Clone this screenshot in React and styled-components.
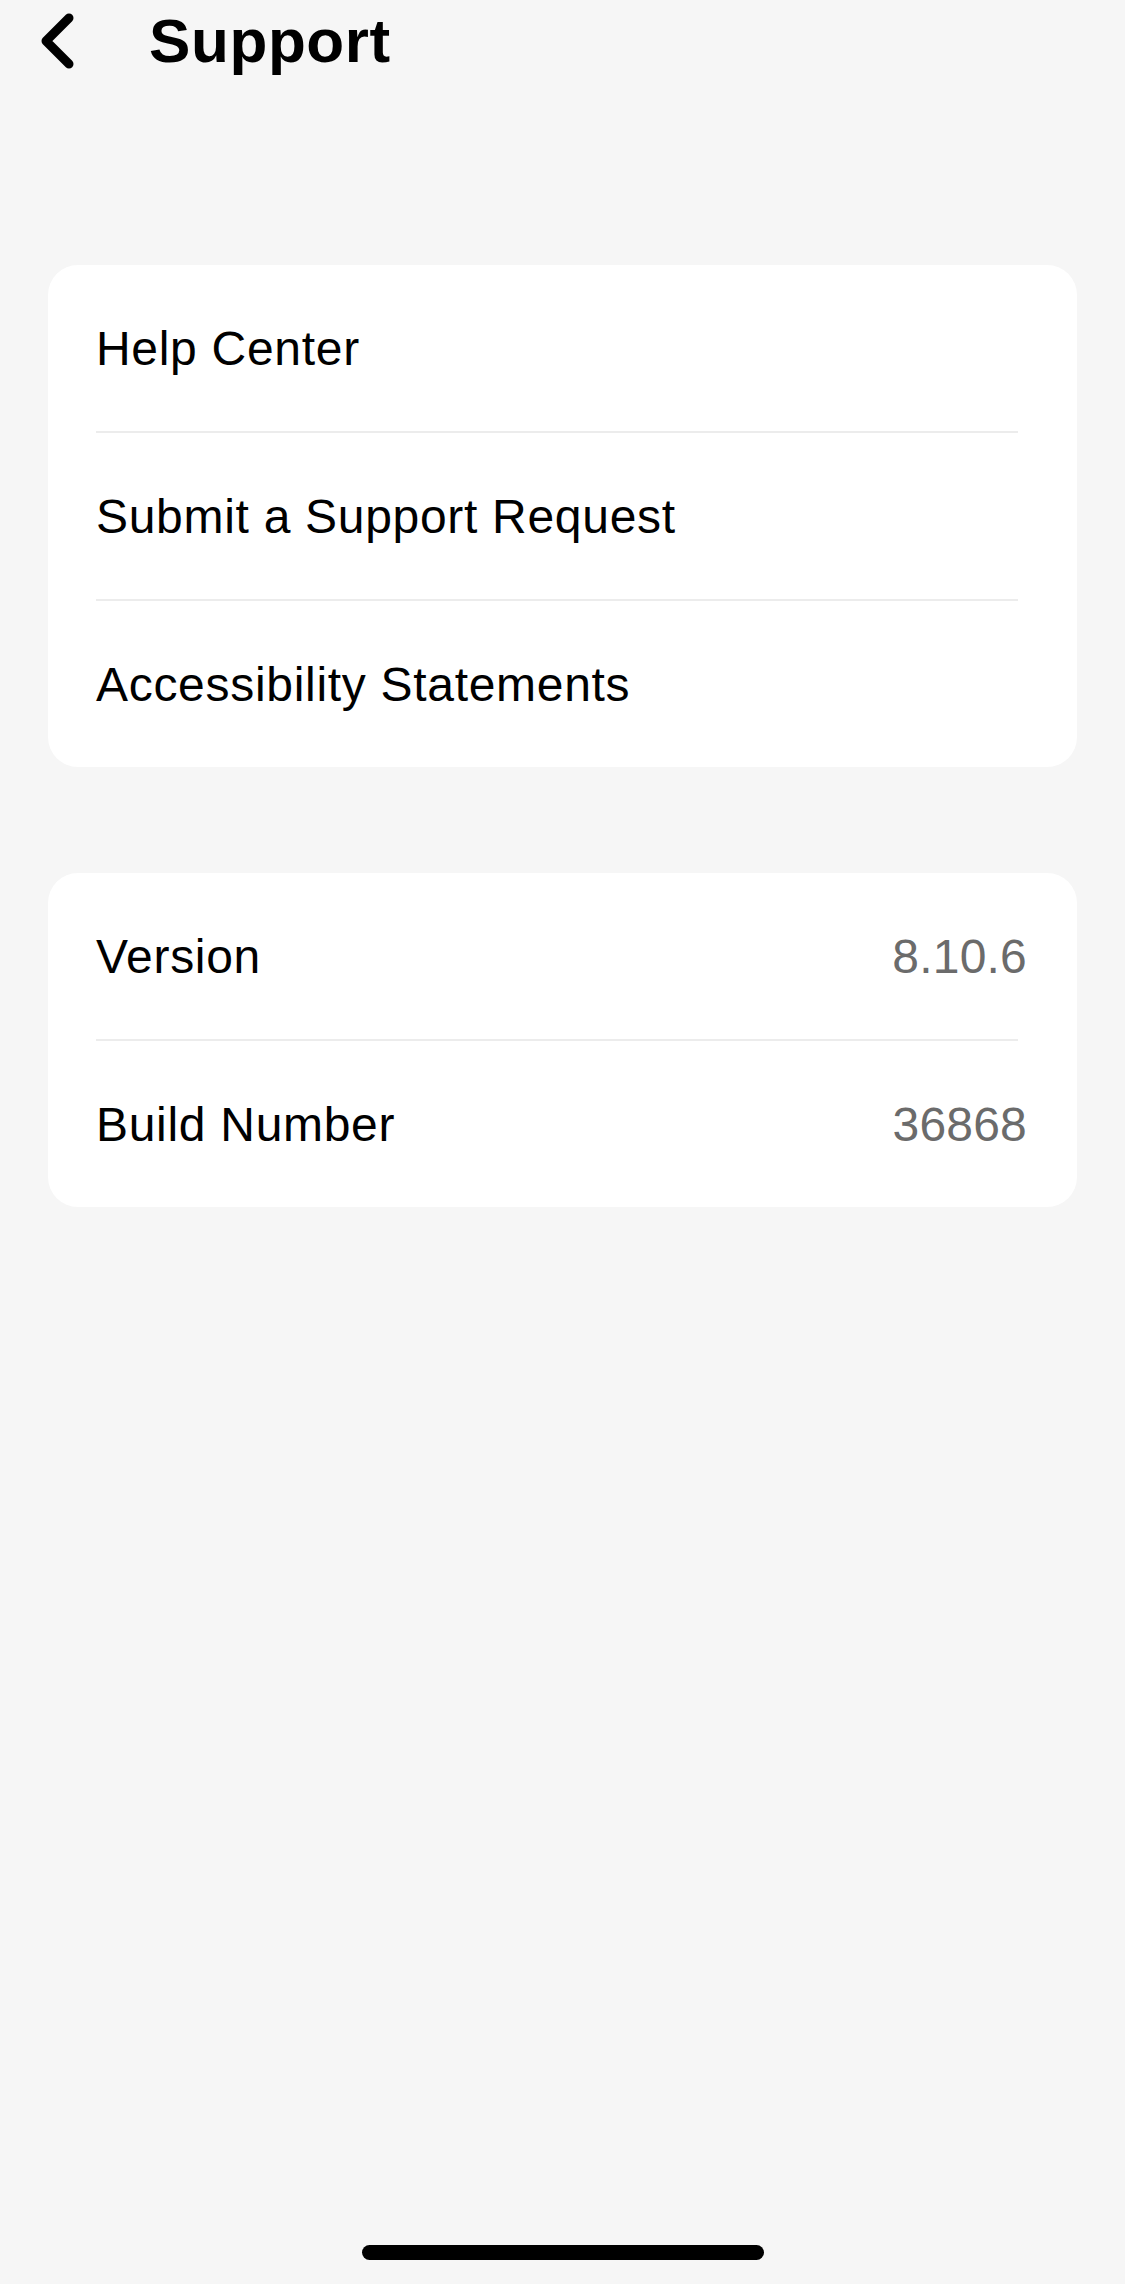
import React from "react";
import styled, { createGlobalStyle } from "styled-components";

const Global = createGlobalStyle`
  html, body { margin: 0; padding: 0; background: #f6f6f6; }
  body { font-family: "Liberation Sans", Arial, sans-serif; -webkit-font-smoothing: antialiased; }
  * { box-sizing: border-box; }
`;

const Screen = styled.div`
  width: 1125px;
  height: 2284px;
  background: #f6f6f6;
  display: flex;
  flex-direction: column;
  padding: 0 48px 24px;
`;

const Header = styled.header`
  height: 82px;
  display: flex;
  align-items: center;
`;

const BackButton = styled.button`
  width: 104px;
  height: 82px;
  margin-left: -48px;
  padding: 0 0 0 38px;
  border: 0;
  background: transparent;
  display: flex;
  align-items: center;
  cursor: pointer;
`;

const Title = styled.h1`
  margin: 0;
  font-size: 62px;
  font-weight: 700;
  color: #000;
  letter-spacing: 0.6px;
  line-height: 1;
  padding-left: 45px;
`;

const Card = styled.section`
  background: #fff;
  border-radius: 30px;
  margin-top: ${(p) => p.$top}px;
  display: flex;
  flex-direction: column;
`;

const Row = styled.div`
  height: 166px;
  display: flex;
  align-items: center;
  justify-content: space-between;
  padding: 0 50px 0 48px;
  font-size: 48px;
  letter-spacing: 0.7px;
  color: #000;
  cursor: ${(p) => (p.$link ? "pointer" : "default")};
`;

const Value = styled.span`
  color: #6b6b6b;
  letter-spacing: 0.2px;
`;

const Divider = styled.div`
  height: 2px;
  background: #ececec;
  margin: 0 59px 0 48px;
`;

const HomeIndicator = styled.div`
  margin-top: auto;
  align-self: center;
  width: 402px;
  height: 15px;
  border-radius: 8px;
  background: #000;
`;

const Chevron = () => (
  <svg width="40" height="60" viewBox="0 0 40 60" fill="none">
    <path
      d="M31 7 L8 30 L31 53"
      stroke="#000"
      strokeWidth="9"
      strokeLinecap="round"
      strokeLinejoin="round"
    />
  </svg>
);

const links = ["Help Center", "Submit a Support Request", "Accessibility Statements"];
const info = [
  ["Version", "8.10.6"],
  ["Build Number", "36868"],
];

export default function App() {
  return (
    <>
      <Global />
      <Screen>
        <Header>
          <BackButton aria-label="Back">
            <Chevron />
          </BackButton>
          <Title>Support</Title>
        </Header>

        <Card $top={183}>
          {links.map((l, i) => (
            <React.Fragment key={l}>
              {i > 0 && <Divider />}
              <Row $link>{l}</Row>
            </React.Fragment>
          ))}
        </Card>

        <Card $top={106}>
          {info.map(([k, v], i) => (
            <React.Fragment key={k}>
              {i > 0 && <Divider />}
              <Row>
                <span>{k}</span>
                <Value>{v}</Value>
              </Row>
            </React.Fragment>
          ))}
        </Card>

        <HomeIndicator />
      </Screen>
    </>
  );
}
